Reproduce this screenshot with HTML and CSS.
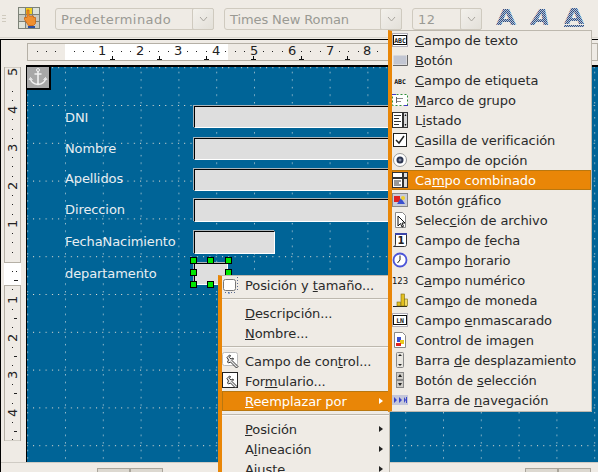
FILE: index.html
```html
<!DOCTYPE html>
<html lang="es">
<head>
<meta charset="utf-8">
<title>Formulario</title>
<link rel="stylesheet" href="styles.css">
</head>
<body>
<svg class="defs" width="0" height="0" aria-hidden="true">
  <defs>
    <pattern id="dither" width="2" height="2" patternUnits="userSpaceOnUse">
      <rect width="2" height="2" fill="#b4c2d6"/>
      <rect width="1" height="1" fill="#2f4a78"/>
      <rect x="1" y="1" width="1" height="1" fill="#3d5a8a"/>
    </pattern>
  </defs>
</svg>
<div class="app">
  <header class="toolbar">
    <span class="grip"></span>
    <svg class="tool-icon" width="22" height="22" viewBox="0 0 22 22">
      <rect x="0.5" y="0.5" width="21" height="21" fill="#c9c9c0" stroke="#7d8278"/>
      <path d="M7.5 1v20M14.5 1v20M1 7.5h20M1 14.5h20" stroke="#7d8278"/>
      <rect x="1" y="1" width="6" height="6" fill="#dfe3d8"/>
      <rect x="8" y="1" width="6" height="6" fill="#f3d21c"/>
      <rect x="15" y="1" width="6" height="6" fill="#dfe3d8"/>
      <rect x="1" y="15" width="6" height="6" fill="#dfe3d8"/>
      <rect x="10" y="19" width="7" height="2" fill="#2b4fa0"/>
      <path d="M9 3h2v6h4.500v1.500h2v6l-2 2h-5l-4-6v-2h2.500z" fill="#ef9030" stroke="#c9620f" stroke-width="0.8"/>
    </svg>
    <div class="combo combo-style"><span class="combo-text">Predeterminado</span><span class="combo-btn"><svg width="9" height="6" viewBox="0 0 9 6"><path d="M1 1l3.500 4L8 1" fill="none" stroke="#a9a69f"/></svg></span></div>
    <div class="combo combo-font"><span class="combo-text">Times New Roman</span><span class="combo-btn"><svg width="9" height="6" viewBox="0 0 9 6"><path d="M1 1l3.500 4L8 1" fill="none" stroke="#a9a69f"/></svg></span></div>
    <div class="combo combo-size"><span class="combo-text">12</span><span class="combo-btn"><svg width="9" height="6" viewBox="0 0 9 6"><path d="M1 1l3.500 4L8 1" fill="none" stroke="#a9a69f"/></svg></span></div>
    <svg class="fmt" width="22" height="27" viewBox="0 0 22 27"><text x="1" y="20" textLength="20" lengthAdjust="spacingAndGlyphs" class="fmt-a">A</text></svg>
    <svg class="fmt" width="22" height="27" viewBox="0 0 22 27"><text x="1" y="20" textLength="19" lengthAdjust="spacingAndGlyphs" class="fmt-a fmt-i">A</text></svg>
    <svg class="fmt fmt-last" width="22" height="27" viewBox="0 0 22 27"><text x="1" y="19" textLength="20" lengthAdjust="spacingAndGlyphs" class="fmt-a">A</text><rect x="1" y="20" width="20" height="2" fill="url(#dither)"/></svg>
  </header>
  <main class="workspace">
    <div class="hruler-row">
      <svg class="hruler" width="571" height="18" viewBox="0 0 571 18">
        <rect x="0.500" y="0.500" width="570" height="17" fill="#efebe5" stroke="#b5b0a6"/>
        <rect x="38" y="1" width="163" height="16" fill="#fff"/>
        <g class="r-dots" fill="#222">
          <rect x="10" y="8" width="1" height="1"/><rect x="19" y="8" width="1" height="1"/><rect x="28" y="8" width="1" height="1"/><rect x="47" y="8" width="1" height="1"/><rect x="56" y="8" width="1" height="1"/><rect x="66" y="8" width="1" height="1"/><rect x="85" y="8" width="1" height="1"/><rect x="94" y="8" width="1" height="1"/><rect x="103" y="8" width="1" height="1"/><rect x="122" y="8" width="1" height="1"/><rect x="131" y="8" width="1" height="1"/><rect x="141" y="8" width="1" height="1"/><rect x="160" y="8" width="1" height="1"/><rect x="169" y="8" width="1" height="1"/><rect x="179" y="8" width="1" height="1"/><rect x="198" y="8" width="1" height="1"/><rect x="208" y="8" width="1" height="1"/><rect x="217" y="8" width="1" height="1"/><rect x="236" y="8" width="1" height="1"/><rect x="245" y="8" width="1" height="1"/><rect x="255" y="8" width="1" height="1"/><rect x="274" y="8" width="1" height="1"/><rect x="283" y="8" width="1" height="1"/><rect x="293" y="8" width="1" height="1"/><rect x="312" y="8" width="1" height="1"/><rect x="321" y="8" width="1" height="1"/><rect x="331" y="8" width="1" height="1"/><rect x="350" y="8" width="1" height="1"/>
        </g>
        <g class="r-tabs" stroke="#111" fill="none" shape-rendering="crispEdges">
          <path d="M85.500 13v4M83 16.500h5M132.500 13v4M130 16.500h5M179.500 13v4M177 16.500h5M226.500 13v4M224 16.500h5M274.500 13v4M272 16.500h5M320.500 13v4M318 16.500h5"/>
        </g>
        <g class="r-num">
          <text x="71" y="12">1</text><text x="109" y="12">2</text><text x="147" y="12">3</text><text x="185" y="12">4</text><text x="223" y="12">5</text><text x="261" y="12">6</text><text x="299" y="12">7</text><text x="336" y="12">8</text>
        </g>
      </svg>
    </div>
    <div class="body-row">
      <svg class="vruler" width="17" height="374" viewBox="0 0 17 374">
        <rect x="0.500" y="0" width="16" height="374" fill="#efebe5" stroke="#b5b0a6"/>
        <rect x="0" y="195" width="17" height="23" fill="#fff"/>
        <rect x="0" y="195" width="17" height="1" fill="#b5b0a6"/><rect x="0" y="218" width="17" height="1" fill="#b5b0a6"/>
        <g fill="#222">
          <rect x="8" y="24" width="1" height="1"/><rect x="8" y="33" width="1" height="1"/><rect x="8" y="52" width="1" height="1"/><rect x="8" y="62" width="1" height="1"/><rect x="8" y="71" width="1" height="1"/><rect x="8" y="90" width="1" height="1"/><rect x="8" y="99" width="1" height="1"/><rect x="8" y="109" width="1" height="1"/><rect x="8" y="128" width="1" height="1"/><rect x="8" y="137" width="1" height="1"/><rect x="8" y="147" width="1" height="1"/><rect x="8" y="166" width="1" height="1"/><rect x="8" y="175" width="1" height="1"/><rect x="8" y="185" width="1" height="1"/><rect x="12" y="204" width="1" height="1"/><rect x="8" y="204" width="1" height="1"/><rect x="8" y="222" width="1" height="1"/><rect x="8" y="242" width="1" height="1"/><rect x="8" y="260" width="1" height="1"/><rect x="8" y="280" width="1" height="1"/><rect x="8" y="298" width="1" height="1"/><rect x="8" y="317" width="1" height="1"/><rect x="8" y="336" width="1" height="1"/><rect x="8" y="355" width="1" height="1"/><rect x="8" y="372" width="1" height="1"/>
          <rect x="10" y="213" width="4" height="1"/><rect x="10" y="251" width="3" height="1"/><rect x="10" y="289" width="3" height="1"/><rect x="10" y="326" width="3" height="1"/><rect x="10" y="364" width="3" height="1"/>
        </g>
        <g class="r-num">
          <text transform="translate(13 9) rotate(-90)">5</text>
          <text transform="translate(13 47) rotate(-90)">4</text>
          <text transform="translate(13 85) rotate(-90)">3</text>
          <text transform="translate(13 123) rotate(-90)">2</text>
          <text transform="translate(13 161) rotate(-90)">1</text>
          <text transform="translate(13 237) rotate(-90)">1</text>
          <text transform="translate(13 275) rotate(-90)">2</text>
          <text transform="translate(13 312) rotate(-90)">3</text>
          <text transform="translate(13 350) rotate(-90)">4</text>
        </g>
      </svg>
      <section class="canvas">
        <svg class="grid" width="571" height="395">
          <defs>
            <pattern id="gv" x="38" y="0" width="37.800" height="7.560" patternUnits="userSpaceOnUse">
              <rect width="1" height="1" y="5" fill="#dfe6e6"/>
            </pattern>
            <pattern id="gh" x="6" y="38" width="6.300" height="37.800" patternUnits="userSpaceOnUse">
              <rect width="1" height="1" fill="#efe4d6"/>
            </pattern>
          </defs>
          <rect width="571" height="395" fill="url(#gv)" shape-rendering="crispEdges"/>
          <rect width="571" height="395" fill="url(#gh)" shape-rendering="crispEdges"/>
        </svg>
        <div class="anchor">
          <svg width="22" height="21" viewBox="0 0 21 21"><path d="M10.500 4v13M7 7h7M3 11.500c.5 4 3.500 5.500 7.500 6 4-.5 7-2 7.500-6" fill="none" stroke="#f1f1f1" stroke-width="1.600"/><circle cx="10.500" cy="3" r="1.500" fill="none" stroke="#f1f1f1"/><path d="M1.500 13l1.500-2.500L5 13M16 13l2-2.500 1.500 2.500" fill="none" stroke="#f1f1f1"/></svg>
        </div>
        <span class="lbl lbl-1">DNI</span>
        <span class="lbl lbl-2">Nombre</span>
        <span class="lbl lbl-3">Apellidos</span>
        <span class="lbl lbl-4">Direccion</span>
        <span class="lbl lbl-5">FechaNacimiento</span>
        <span class="lbl lbl-6">departamento</span>
        <div class="field f-1"></div>
        <div class="field f-2"></div>
        <div class="field f-3"></div>
        <div class="field f-4"></div>
        <div class="field f-5"></div>
        <div class="field f-6"></div>
        <i class="h h1"></i><i class="h h2"></i><i class="h h3"></i><i class="h h4"></i><i class="h h5"></i><i class="h h6"></i><i class="h h7"></i>
      </section>
    </div>
    <footer class="hscroll">
      <div class="hscroll-left"><span class="sbtn"></span><span class="sbtn"></span></div>
      <div class="hscroll-right"><span class="sbtn"></span><span class="sbtn"></span></div>
    </footer>
  </main>

  <nav class="menu ctx">
    <div class="mi ctx-first"><svg class="ico ctx-ico" width="24" height="22" viewBox="0 0 24 22"><path d="M15.500 2v13M3 17.500h11" stroke="#5a6a90" stroke-dasharray="1 2"/><path d="M7 17v2" stroke="#3a6ab0"/><rect x="1.500" y="4.500" width="12" height="11" rx="2" fill="#fff" stroke="#777"/></svg><span>Posición y <u>t</u>amaño...</span></div>
    <hr class="sep">
    <div class="mi"><span><u>D</u>escripción...</span></div>
    <div class="mi"><span><u>N</u>ombre...</span></div>
    <hr class="sep">
    <div class="mi"><svg class="ico ctx-ico" width="24" height="20" viewBox="0 0 24 20"><rect x="0.500" y="1.500" width="15" height="13" rx="2" fill="#fff" stroke="#bbb"/><path d="M5 6.500l2.500-2.500 1 .5-1 2 1.500 1.500 2-1 .5 1-1.500 1.500 6 6-1.500 1.500-6-6-2 1-1-1 1-2z" fill="#e6e6e6" stroke="#222" stroke-width="0.9"/></svg><span>Campo de con<u>t</u>rol...</span></div>
    <div class="mi"><svg class="ico ctx-ico" width="24" height="20" viewBox="0 0 24 20"><rect x="0.500" y="1.500" width="15" height="15" fill="#fff" stroke="#222"/><path d="M5 7.500l2.500-2.500 1 .5-1 2 1.500 1.500 2-1 .5 1-1.500 1.500 5 5-1.500 1.500-5-5-2 1-1-1 1-2z" fill="#e6e6e6" stroke="#222" stroke-width="0.9"/></svg><span>For<u>m</u>ulario...</span></div>
    <div class="mi mi-on"><span><u>R</u>eemplazar por</span><b class="arr"></b></div>
    <hr class="sep">
    <div class="mi"><span><u>P</u>osición</span><b class="arr"></b></div>
    <div class="mi"><span>A<u>l</u>ineación</span><b class="arr"></b></div>
    <div class="mi"><span>Ajuste</span><b class="arr"></b></div>
  </nav>

  <nav class="menu sub">
    <div class="si"><svg class="ico" width="16" height="14" viewBox="0 0 16 14"><rect x="0.500" y="0.500" width="15" height="13" fill="#fff" stroke="#b0aeb8"/><rect x="1.500" y="2.500" width="13" height="9" fill="#fff" stroke="#111"/><text x="8" y="10" class="ic-t">ABC</text></svg><span><u>C</u>ampo de texto</span></div>
    <div class="si"><svg class="ico" width="16" height="14" viewBox="0 0 16 14"><rect x="1.500" y="2.500" width="13" height="9" fill="#c2c6d2"/><path d="M1 12.500h14.500V2" fill="none" stroke="#666"/></svg><span><u>B</u>otón</span></div>
    <div class="si"><svg class="ico" width="16" height="14" viewBox="0 0 16 14"><text x="8" y="10.500" class="ic-t">ABC</text></svg><span><u>C</u>ampo de etiqueta</span></div>
    <div class="si"><svg class="ico" width="16" height="14" viewBox="0 0 16 14"><rect x="0.500" y="1.500" width="15" height="11" fill="#fff" stroke="#2f8f3a" stroke-dasharray="2 2"/><path d="M0 1.500h4M12 12.500h4" stroke="#4338c8"/><path d="M5 5.500h6M5 8.500h4" stroke="#888"/><path d="M4.500 4v6" stroke="#666"/></svg><span><u>M</u>arco de grupo</span></div>
    <div class="si"><svg class="ico" width="16" height="16" viewBox="0 0 16 16"><rect x="0.500" y="0.500" width="10" height="15" fill="#fff" stroke="#333"/><path d="M2 3.500h7M2 6.500h5M2 9.500h7M2 12.500h5" stroke="#333"/><rect x="11.500" y="0.500" width="4" height="15" fill="#d8d8d8" stroke="#333"/><path d="M12.500 4l1-2 1 2zM12.500 12l1 2 1-2z" fill="#111"/></svg><span>L<u>i</u>stado</span></div>
    <div class="si"><svg class="ico" width="16" height="16" viewBox="0 0 16 16"><rect x="1.500" y="1.500" width="13" height="13" fill="#fff" stroke="#222"/><path d="M4 8l3 3 5-7" fill="none" stroke="#222" stroke-width="1.500"/></svg><span><u>C</u>asilla de verificación</span></div>
    <div class="si"><svg class="ico" width="16" height="16" viewBox="0 0 16 16"><circle cx="8" cy="8" r="6.500" fill="#fff" stroke="#999"/><circle cx="8" cy="8" r="3.500" fill="#2c3550"/><circle cx="8" cy="8" r="1.500" fill="#8a90a8"/></svg><span><u>C</u>ampo de opción</span></div>
    <div class="si si-on"><svg class="ico" width="16" height="16" viewBox="0 0 16 16"><rect x="0.500" y="0.500" width="10" height="5" fill="#fff" stroke="#333"/><rect x="0.500" y="6.500" width="10" height="9" fill="#fff" stroke="#333"/><path d="M2 9h7M2 11h5M2 13h7" stroke="#333"/><rect x="11.500" y="6.500" width="4" height="9" fill="#ddd" stroke="#333"/><rect x="11.500" y="0.500" width="4" height="5" fill="#ddd" stroke="#333"/></svg><span>Ca<u>m</u>po combinado</span></div>
    <div class="si"><svg class="ico" width="16" height="14" viewBox="0 0 16 14"><rect x="0.500" y="0.500" width="15" height="13" fill="#c9ccd8" stroke="#888"/><rect x="2" y="3" width="6" height="6" fill="#e02020"/><path d="M5 11l4-6 4 6z" fill="#3a50d0"/><circle cx="11" cy="5" r="2" fill="#f0d030"/></svg><span>Botón g<u>r</u>áfico</span></div>
    <div class="si"><svg class="ico" width="16" height="16" viewBox="0 0 16 16"><path d="M3.500.5h7l3 3v12h-10z" fill="#fff" stroke="#888"/><path d="M6 4v10l2.500-2.500 1.500 3.500 1.500-.7-1.500-3.300h3z" fill="#fff" stroke="#111"/></svg><span>Selec<u>c</u>ión de archivo</span></div>
    <div class="si"><svg class="ico" width="16" height="16" viewBox="0 0 16 16"><path d="M3.500 1.500h11v11c0 1.500-1 2-2 2h-11c1 0 2-.7 2-2z" fill="#fff" stroke="#333"/><rect x="3" y="1" width="12" height="2" fill="#3a45a8"/><text x="9" y="12" class="ic-n">1</text></svg><span>Campo de <u>f</u>echa</span></div>
    <div class="si"><svg class="ico" width="16" height="16" viewBox="0 0 16 16"><circle cx="8" cy="8" r="6.500" fill="#fff" stroke="#4c55d8" stroke-width="1.800"/><path d="M8 3.500V8l-2.500 3" fill="none" stroke="#222"/></svg><span>Campo <u>h</u>orario</span></div>
    <div class="si"><svg class="ico" width="16" height="14" viewBox="0 0 16 14"><text x="8" y="11" class="ic-123">123</text></svg><span>C<u>a</u>mpo numérico</span></div>
    <div class="si"><svg class="ico" width="16" height="16" viewBox="0 0 16 16"><path d="M1 14.500h14" stroke="#222"/><rect x="9" y="2" width="3.500" height="12" fill="#e4c020" stroke="#7a6a10" stroke-width="0.600"/><rect x="5" y="10" width="3.500" height="4" fill="#e4c020" stroke="#7a6a10" stroke-width="0.600"/><rect x="12.500" y="7" width="3" height="7" fill="#f4dc60" stroke="#7a6a10" stroke-width="0.600"/></svg><span>Cam<u>p</u>o de moneda</span></div>
    <div class="si"><svg class="ico" width="16" height="14" viewBox="0 0 16 14"><rect x="0.500" y="0.500" width="15" height="13" fill="#fff" stroke="#b0aeb8"/><rect x="1.500" y="2.500" width="13" height="9" fill="#fff" stroke="#111"/><text x="8" y="10" class="ic-t">LN</text></svg><span>Campo <u>e</u>nmascarado</span></div>
    <div class="si"><svg class="ico" width="16" height="16" viewBox="0 0 16 16"><path d="M2.500.5h8l3 3v12h-11z" fill="#fff" stroke="#888"/><rect x="5" y="5" width="4" height="5" fill="#3a50d0"/><rect x="8" y="8" width="4" height="4" fill="#e8c820"/><rect x="4" y="11" width="5" height="3" fill="#e02020"/></svg><span>Control de ima<u>g</u>en</span></div>
    <div class="si"><svg class="ico" width="16" height="16" viewBox="0 0 16 16"><rect x="4.500" y="0.500" width="7" height="15" rx="1" fill="#e8e6e0" stroke="#888"/><path d="M6 4l2-2 2 2zM6 12l2 2 2-2z" fill="#222"/></svg><span>Barra <u>d</u>e desplazamiento</span></div>
    <div class="si"><svg class="ico" width="16" height="16" viewBox="0 0 16 16"><rect x="4.500" y="0.500" width="7" height="7" fill="#cfcdc8" stroke="#888"/><rect x="4.500" y="8.500" width="7" height="7" fill="#cfcdc8" stroke="#888"/><path d="M6 5l2-3 2 3zM6 11l2 3 2-3z" fill="#222"/></svg><span>Botón de <u>s</u>elección</span></div>
    <div class="si"><svg class="ico" width="16" height="10" viewBox="0 0 16 10"><rect width="16" height="10" fill="#c4c6da"/><path d="M2 2l3 3-3 3zM7 2l3 3-3 3zM12 2l2 3-2 3z" fill="#3a45c8"/><path d="M14.500 2v6" stroke="#3a45c8"/></svg><span>Barra de <u>n</u>avegación</span></div>
  </nav>
</div>
</body>
</html>
```
FILE: styles.css
```css
* { box-sizing: border-box; }
html, body { margin: 0; height: 100%; overflow: hidden; }
body { background: #efebe5; font-family: "DejaVu Sans", sans-serif; font-size: 13px; color: #2a2a2a; }
.defs { position: absolute; }
.app { position: relative; width: 598px; height: 472px; overflow: hidden; display: flex; flex-direction: column; }

.toolbar { height: 38px; flex: none; display: flex; align-items: flex-start; padding-top: 7px; border-bottom: 1px solid #dad6cf; }
.grip { width: 4px; height: 7px; margin: 8px 0 0 2px; background: repeating-linear-gradient(#cfcabe 0 1px, transparent 1px 3px); }
.tool-icon { margin-left: 12px; }
.combo { height: 22px; margin-top: 1px; display: flex; border: 1px solid #cfcabf; border-radius: 3px; color: #9a9a94; background: #efebe5; font-size: 13px; letter-spacing: .45px; }
.combo-text { flex: 1; padding: 3px 0 0 5px; white-space: nowrap; overflow: hidden; }
.combo-btn { width: 22px; margin: -1px -1px -1px 0; display: flex; align-items: center; justify-content: center; border: 1px solid #cfcabf; background: linear-gradient(135deg, #f3f1ec, #e3e0d9); border-radius: 2px; }
.combo-style { width: 159px; margin-left: 15px; }
.combo-font { width: 178px; margin-left: 10px; letter-spacing: -.1px; }
.combo-size { width: 70px; margin-left: 10px; }
.fmt { display: block; margin-top: -2px; margin-left: 13px; }
.fmt-last { margin-left: 11px; }
.fmt-a { font: bold 21px "DejaVu Sans", sans-serif; fill: url(#dither); }
.fmt-i { font-style: italic; }

.workspace { flex: 1; min-height: 0; margin-top: 1px; border-top: 1px solid #000; border-left: 1px solid #000; display: flex; flex-direction: column; }
.hruler-row { height: 25px; flex: none; padding: 3px 0 0 26px; }
.hruler { display: block; }
.r-num text { font: 13px "DejaVu Sans", sans-serif; fill: #222; }
.body-row { flex: none; height: 397px; display: flex; }
.vruler { display: block; margin: 2px 0 0 3px; flex: none; }
.canvas { position: relative; width: 571px; height: 397px; margin-left: 6px; border-top: 2px solid #000; background: #006497; box-shadow: -1px 0 0 #000; }
.grid { position: absolute; left: 0; top: 0; }
.anchor { position: absolute; left: 0; top: 0; width: 24px; height: 23px; border-right: 2px solid #000; border-bottom: 2px solid #000; background: #a8a8a8; }
.anchor svg { display: block; margin: 0; }

.lbl { position: absolute; left: 38px; color: #e8eef2; font-size: 13px; line-height: 16px; letter-spacing: -.1px; white-space: nowrap; }
.lbl-1 { top: 43px; } .lbl-2 { top: 74px; } .lbl-3 { top: 104px; } .lbl-4 { top: 135px; } .lbl-5 { top: 167px; } .lbl-6 { top: 199px; }
.field { position: absolute; left: 167px; width: 200px; background: #dedede; border: 1px solid; border-color: #000 #fff #fff #000; box-shadow: -1px -1px 0 #a9b4ba; }
.f-1 { top: 39px; height: 22px; } .f-2 { top: 71px; height: 22px; } .f-3 { top: 102px; height: 22px; } .f-4 { top: 132px; height: 23px; }
.f-5 { top: 164px; height: 23px; width: 81px; }
.f-6 { top: 196px; height: 22px; width: 34px; }
.h { position: absolute; width: 7px; height: 7px; background: #00e800; border: 1px solid #000; }
.h1 { left: 163px; top: 190px; } .h2 { left: 180px; top: 190px; } .h3 { left: 198px; top: 190px; }
.h4 { left: 163px; top: 202px; } .h5 { left: 198px; top: 202px; }
.h6 { left: 163px; top: 214px; } .h7 { left: 180px; top: 214px; }

.hscroll { flex: 1; display: flex; justify-content: space-between; padding: 5px 7px 0 96px; border-top: 1px solid #cfcbc4; background: #efebe5; }
.hscroll-left, .hscroll-right { display: flex; }
.sbtn { width: 33px; height: 6px; border: 1px solid #a9a59b; border-bottom: 0; background: #dcd8d0; }

.menu { position: absolute; background: #efebe5; border: 1px solid #bdb8ae; border-left: 4px solid #e98607; color: #2a2a2a; font-size: 13px; letter-spacing: -.08px; }
.ctx { left: 218px; top: 275px; width: 172px; height: 200px; }
.sub { left: 388px; top: 30px; width: 204px; height: 382px; }
.mi { position: relative; height: 20px; padding-left: 23px; display: flex; align-items: center; justify-content: space-between; white-space: nowrap; }
.mi-on, .si-on { background: #e98607; color: #fff; outline: 1px solid #b9770f; outline-offset: -1px; }
.ctx-ico { position: absolute; left: 0; top: 0; }
.ctx-first { margin-top: -1px; }
.arr { width: 0; height: 0; margin-right: 6px; border: 3px solid transparent; border-left: 4px solid #222; border-right: 0; }
.mi-on .arr { border-left-color: #fff; }
.sep { height: 2px; margin: 3px 0; border: 0; border-top: 1px solid #bdb8ae; border-bottom: 1px solid #f8f6f2; }
.si { height: 20px; position: relative; padding-left: 23px; display: flex; align-items: center; white-space: nowrap; }
.si:first-child { margin-top: -1px; }
.si .ico { position: absolute; left: 0; top: 50%; transform: translateY(-50%); }
.ic-t { font: bold 6.500px "DejaVu Sans Mono", monospace; text-anchor: middle; fill: #111; }
.ic-n { font: bold 10px "DejaVu Sans", sans-serif; text-anchor: middle; fill: #222; }
.ic-123 { font: 8.500px "DejaVu Sans", sans-serif; text-anchor: middle; fill: #111; }
```
